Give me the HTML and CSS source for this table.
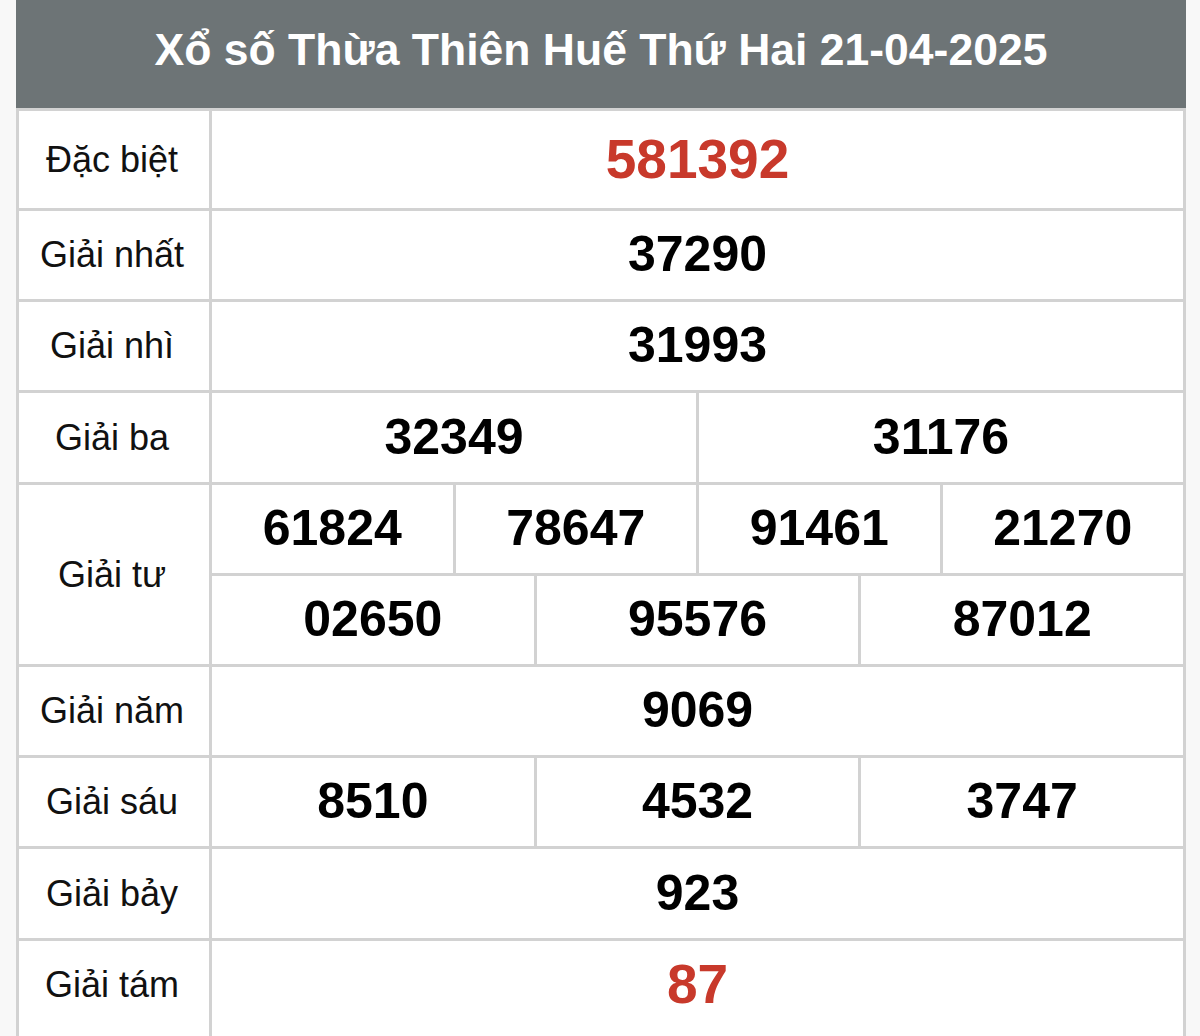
FILE: index.html
```html
<!DOCTYPE html>
<html lang="vi">
<head>
<meta charset="utf-8">
<title>Xổ số Thừa Thiên Huế</title>
<link rel="stylesheet" href="styles.css">
</head>
<body>
<div class="board">
  <div class="head">Xổ số Thừa Thiên Huế Thứ Hai 21-04-2025</div>
  <div class="body">
    <div class="row row-first">
      <div class="label">Đặc biệt</div>
      <div class="cells"><div class="cell special">581392</div></div>
    </div>
    <div class="row">
      <div class="label">Giải nhất</div>
      <div class="cells"><div class="cell">37290</div></div>
    </div>
    <div class="row">
      <div class="label">Giải nhì</div>
      <div class="cells"><div class="cell">31993</div></div>
    </div>
    <div class="row row-tall">
      <div class="label">Giải ba</div>
      <div class="cells"><div class="cell">32349</div><div class="cell">31176</div></div>
    </div>
    <div class="row">
      <div class="label">Giải tư</div>
      <div class="stack">
        <div class="cells"><div class="cell">61824</div><div class="cell">78647</div><div class="cell">91461</div><div class="cell">21270</div></div>
        <div class="cells sub"><div class="cell">02650</div><div class="cell">95576</div><div class="cell">87012</div></div>
      </div>
    </div>
    <div class="row">
      <div class="label">Giải năm</div>
      <div class="cells"><div class="cell">9069</div></div>
    </div>
    <div class="row">
      <div class="label">Giải sáu</div>
      <div class="cells"><div class="cell">8510</div><div class="cell">4532</div><div class="cell">3747</div></div>
    </div>
    <div class="row row-tall">
      <div class="label">Giải bảy</div>
      <div class="cells"><div class="cell">923</div></div>
    </div>
    <div class="row row-last">
      <div class="label">Giải tám</div>
      <div class="cells"><div class="cell special">87</div></div>
    </div>
  </div>
</div>
</body>
</html>
```

FILE: styles.css
```css
html, body {
  margin: 0;
  padding: 0;
}
body {
  background: #f8f8f8;
  font-family: "Liberation Sans", Arial, sans-serif;
  color: #111;
}
.board {
  width: 1170px;
  margin-left: 16px;
}
.head {
  height: 108px;
  background: #6d7476;
  color: #fff;
  font-weight: bold;
  font-size: 44.5px;
  display: flex;
  align-items: center;
  justify-content: center;
  padding-bottom: 8px;
  box-sizing: border-box;
}
.body {
  background: #fff;
  border-left: 3px solid #d2d2d2;
  border-right: 3px solid #d2d2d2;
}
.row {
  display: flex;
  border-top: 3px solid #d2d2d2;
}
.label {
  width: 193px;
  flex: none;
  border-right: 3px solid #d2d2d2;
  display: flex;
  align-items: center;
  justify-content: center;
  font-size: 36px;
  color: #111;
  padding-right: 4px;
  box-sizing: border-box;
}
.stack {
  flex: 1;
  display: flex;
  flex-direction: column;
}
.cells {
  flex: 1;
  display: flex;
  height: 88px;
}
.stack .cells {
  flex: none;
}
.row-first .cells { height: 97px; }
.row-tall .cells { height: 89px; }
.row-last .cells {
  height: 95px;
  padding-bottom: 7px;
  box-sizing: border-box;
}
.row-last .label {
  padding-bottom: 7px;
}
.cells.sub {
  border-top: 3px solid #d2d2d2;
}
.cell {
  flex: 1;
  display: flex;
  align-items: center;
  justify-content: center;
  font-weight: bold;
  font-size: 50px;
  color: #000;
  padding-bottom: 2px;
}
.cell + .cell {
  border-left: 3px solid #d2d2d2;
}
.cell.special {
  color: #c8392b;
  font-size: 55px;
}
```
